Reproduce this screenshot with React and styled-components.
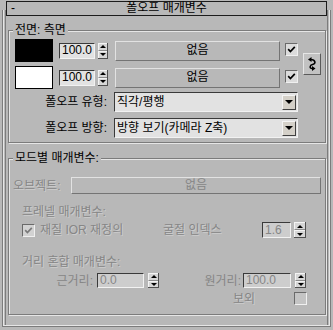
import React from 'react';
import styled, { createGlobalStyle } from 'styled-components';

const BG = '#b8b8b8';
const DARK = '#7c7c7c';
const LIGHT = '#e6e6e6';
const DIS = '#868686';

const Global = createGlobalStyle`
  html, body { margin: 0; padding: 0; background: ${BG}; }
  body {
    font-family: "Liberation Sans", "Noto Sans CJK KR", sans-serif;
    font-size: 12px;
    color: #000;
  }
`;

const Page = styled.div`
  width: 333px;
  height: 330px;
  box-sizing: border-box;
  padding-top: 1px;
  background: ${BG};
  overflow: hidden;
`;

const Header = styled.div`
  position: relative;
  z-index: 1;
  margin: 0 6px;
  height: 15px;
  box-sizing: border-box;
  border: 1px solid #1c1c1c;
  background: ${BG};
  display: grid;
  grid-template-columns: 22px 1fr 22px;
  align-items: center;
  line-height: 13px;
`;

const Collapse = styled.span`
  padding-left: 4px;
`;

const Title = styled.span`
  text-align: center;
`;

const Body = styled.div`
  margin: -6px 2px 0;
  height: 317px;
  box-sizing: border-box;
  border: 1px solid ${DARK};
  border-top: none;
  box-shadow:
    inset 1px 0 0 ${LIGHT},
    inset -1px 0 0 ${LIGHT},
    inset 0 -1px 0 ${LIGHT},
    inset 2px 0 0 ${BG},
    inset -2px 0 0 ${BG},
    inset 3px 0 0 ${DARK},
    inset -3px 0 0 ${DARK};
  padding: 20px 4px 0 5px;
`;

const Group = styled.div`
  position: relative;
  border: 1px solid ${DARK};
  box-shadow: 1px 1px 0 ${LIGHT}, inset 1px 1px 0 ${LIGHT};
  padding: ${p => p.$pad};
  margin-top: ${p => p.$mt || 0}px;
`;

const Legend = styled.span`
  position: absolute;
  top: -8px;
  left: 4px;
  padding: 0 2px;
  background: ${BG};
  line-height: 14px;
`;

const ColorArea = styled.div`
  display: flex;
  align-items: center;
`;

const ColorRows = styled.div`
  display: flex;
  flex-direction: column;
  gap: 4px;
`;

const ColorRow = styled.div`
  display: flex;
  align-items: center;
  height: 23px;
`;

const Swatch = styled.div`
  width: 38px;
  height: 23px;
  box-sizing: border-box;
  border: 1px solid #000;
  background: ${p => p.$color};
`;

const Field = styled.div`
  width: ${p => p.$w}px;
  height: ${p => p.$h || 16}px;
  margin-left: ${p => p.$ml || 0}px;
  box-sizing: border-box;
  border-top: 1px solid #3a3a3a;
  border-left: 1px solid #3a3a3a;
  border-right: 1px solid #f2f2f2;
  border-bottom: 1px solid #f2f2f2;
  background: ${p => (p.$disabled ? '#cdcdcd' : '#e2e2e2')};
  color: ${p => (p.$disabled ? DIS : '#000')};
  display: flex;
  align-items: center;
  padding-left: 2px;
  line-height: 13px;
`;

const Spinner = styled.div`
  width: ${p => p.$w || 10}px;
  height: ${p => p.$h || 16}px;
  margin-left: ${p => p.$ml || 3}px;
  display: flex;
  flex-direction: column;
  box-sizing: border-box;
  border-right: 1px solid #505050;
  border-bottom: 1px solid #505050;
`;

const SpinHalf = styled.div`
  flex: 1;
  background: #d6d6d6;
  border-top: 1px solid #f4f4f4;
  border-left: 1px solid #f4f4f4;
  border-bottom: ${p => (p.$top ? '1px solid #8a8a8a' : 'none')};
  display: flex;
  align-items: center;
  justify-content: center;
`;

const Tri = styled.span`
  width: 0;
  height: 0;
  border-left: ${p => p.$s || 3}px solid transparent;
  border-right: ${p => p.$s || 3}px solid transparent;
  border-${p => (p.$up ? 'bottom' : 'top')}: ${p => p.$s || 3}px solid #000;
`;

const PushButton = styled.div`
  width: ${p => p.$w}px;
  height: ${p => p.$h}px;
  margin-left: ${p => p.$ml || 0}px;
  box-sizing: border-box;
  border-top: 1px solid #e2e2e2;
  border-left: 1px solid #e2e2e2;
  border-right: 1px solid #747474;
  border-bottom: 1px solid #747474;
  background: ${BG};
  color: ${p => (p.$disabled ? DIS : '#000')};
  display: flex;
  align-items: center;
  justify-content: center;
  line-height: 13px;
`;

const Check = styled.div`
  width: 13px;
  height: 13px;
  flex: none;
  margin-left: ${p => p.$ml || 0}px;
  align-self: ${p => (p.$start ? 'flex-start' : 'center')};
  margin-top: ${p => p.$mt || 0}px;
  box-sizing: border-box;
  border-top: 1px solid #6a6a6a;
  border-left: 1px solid #6a6a6a;
  border-right: 1px solid #f0f0f0;
  border-bottom: 1px solid #f0f0f0;
  background: ${p => p.$bg || '#dcdcdc'};
  display: flex;
  align-items: center;
  justify-content: center;
`;

const SwapButton = styled.div`
  width: 18px;
  height: 22px;
  margin-left: 5px;
  box-sizing: border-box;
  border-top: 1px solid #e6e6e6;
  border-left: 1px solid #e6e6e6;
  border-right: 1px solid #5a5a5a;
  border-bottom: 1px solid #5a5a5a;
  background: #c2c2c2;
  display: flex;
  align-items: center;
  justify-content: center;
`;

const SelectRow = styled.div`
  display: flex;
  align-items: center;
  height: 20px;
  margin-top: ${p => p.$mt}px;
`;

const RightLabel = styled.span`
  width: ${p => p.$w}px;
  flex: none;
  text-align: right;
  line-height: 14px;
  color: ${p => (p.$disabled ? DIS : '#000')};
  margin-right: ${p => p.$mr || 0}px;
`;

const Select = styled.div`
  width: 184px;
  height: 20px;
  box-sizing: border-box;
  border-top: 1px solid #3a3a3a;
  border-left: 1px solid #3a3a3a;
  border-right: 1px solid #f2f2f2;
  border-bottom: 1px solid #f2f2f2;
  background: #e2e2e2;
  display: flex;
  align-items: center;
  padding-left: 2px;
`;

const SelectText = styled.span`
  flex: 1;
  line-height: 14px;
  white-space: nowrap;
`;

const DropBtn = styled.div`
  width: 14px;
  height: 15px;
  margin-right: 1px;
  box-sizing: border-box;
  border-top: 1px solid #f4f4f4;
  border-left: 1px solid #f4f4f4;
  border-right: 1px solid #404040;
  border-bottom: 1px solid #404040;
  background: #d4d0c8;
  display: flex;
  align-items: center;
  justify-content: center;
`;

const Row = styled.div`
  display: flex;
  align-items: center;
  height: ${p => p.$h}px;
  margin-top: ${p => p.$mt || 0}px;
  padding-left: ${p => p.$pl || 0}px;
`;

const Label = styled.span`
  width: ${p => (p.$w ? `${p.$w}px` : 'auto')};
  flex: none;
  margin-left: ${p => p.$ml || 0}px;
  line-height: 14px;
  white-space: nowrap;
  color: ${p => (p.$disabled ? DIS : '#000')};
  text-shadow: ${p => (p.$disabled ? '1px 1px 0 rgba(255,255,255,0.3)' : 'none')};
`;

const SubHeading = styled.div`
  margin: ${p => p.$mt}px 0 0 9px;
  line-height: 14px;
  color: ${DIS};
  text-shadow: 1px 1px 0 rgba(255, 255, 255, 0.3);
`;

const CheckMark = ({ color = '#000' }) => (
  <svg width="9" height="9" viewBox="0 0 9 9">
    <path d="M1.2 4.2 L3.4 6.5 L7.8 1.8" fill="none" stroke={color} strokeWidth="1.7" />
  </svg>
);

const SwapIcon = () => (
  <svg width="12" height="16" viewBox="0 0 12 16">
    <path d="M4.5 3.5 C10 3.5 10 8 6.5 8.5 C3.5 9 3.5 12.5 6 12.5" fill="none" stroke="#000" strokeWidth="1.6" />
    <polygon points="2,3.5 5.5,1 5.5,6" fill="#000" />
    <polygon points="9.5,12.5 6,10 6,15" fill="#000" />
  </svg>
);

const Spin = ({ w, h, ml }) => (
  <Spinner $w={w} $h={h} $ml={ml}>
    <SpinHalf $top>
      <Tri $up />
    </SpinHalf>
    <SpinHalf>
      <Tri />
    </SpinHalf>
  </Spinner>
);

const Dropdown = ({ label, value, mt }) => (
  <SelectRow $mt={mt}>
    <RightLabel $w={92} $mr={7}>{label}</RightLabel>
    <Select>
      <SelectText>{value}</SelectText>
      <DropBtn>
        <Tri $s={4} />
      </DropBtn>
    </Select>
  </SelectRow>
);

const ColorLine = ({ color }) => (
  <ColorRow>
    <Swatch $color={color} />
    <Field $w={36} $ml={6}>100.0</Field>
    <Spin w={10} h={16} ml={3} />
    <PushButton $w={165} $h={20} $ml={7}>없음</PushButton>
    <Check $ml={5} $start $mt={4}>
      <CheckMark />
    </Check>
  </ColorRow>
);

export default function App() {
  return (
    <>
      <Global />
      <Page>
        <Header>
          <Collapse>-</Collapse>
          <Title>폴오프 매개변수</Title>
          <span />
        </Header>
        <Body>
          <Group $pad="8px 4px 4px 6px">
            <Legend>전면: 측면</Legend>
            <ColorArea>
              <ColorRows>
                <ColorLine color="#000" />
                <ColorLine color="#fff" />
              </ColorRows>
              <SwapButton>
                <SwapIcon />
              </SwapButton>
            </ColorArea>
            <Dropdown label="폴오프 유형:" value="직각/평행" mt={3} />
            <Dropdown label="폴오프 방향:" value="방향 보기(카메라 Z축)" mt={6} />
          </Group>

          <Group $pad="18px 4px 9px 4px" $mt={15}>
            <Legend>모드별 매개변수:</Legend>
            <Row $h={17}>
              <Label $w={58} $disabled>오브젝트:</Label>
              <PushButton $w={250} $h={17} $disabled>없음</PushButton>
            </Row>
            <SubHeading $mt={11}>프레넬 매개변수:</SubHeading>
            <Row $h={16} $mt={3} $pl={9}>
              <Check $bg="#d2d2d2">
                <CheckMark color="#7a7a7a" />
              </Check>
              <Label $w={123} $ml={5} $disabled>재질 IOR 재정의</Label>
              <Label $w={99} $disabled>굴절 인덱스</Label>
              <Field $w={29} $disabled>1.6</Field>
              <Spin w={12} h={16} ml={3} />
            </Row>
            <SubHeading $mt={17}>거리 혼합 매개변수:</SubHeading>
            <Row $h={15} $mt={4}>
              <RightLabel $w={80} $mr={4} $disabled>근거리:</RightLabel>
              <Field $w={47} $h={15} $disabled>0.0</Field>
              <Spin w={11} h={15} ml={4} />
              <RightLabel $w={82} $mr={2} $disabled>원거리:</RightLabel>
              <Field $w={48} $h={15} $disabled>100.0</Field>
              <Spin w={11} h={15} ml={4} />
            </Row>
            <Row $h={13} $mt={4} $pl={220}>
              <Label $w={61} $disabled>보외</Label>
              <Check $bg="#c4c4c4" />
            </Row>
          </Group>
        </Body>
      </Page>
    </>
  );
}
